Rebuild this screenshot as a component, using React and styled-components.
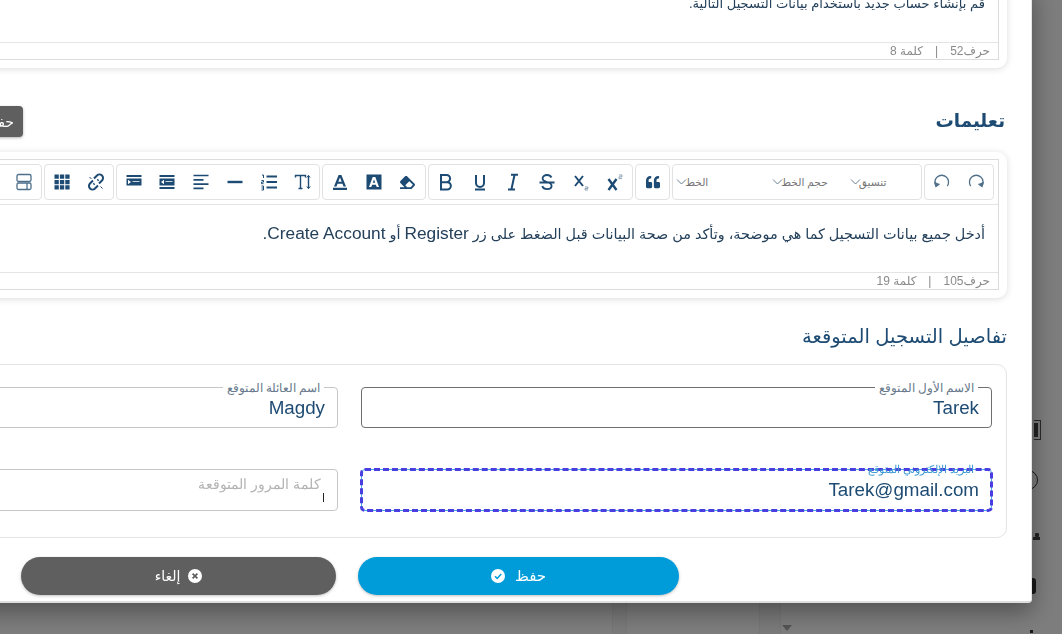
import React from 'react';
import styled, { createGlobalStyle } from 'styled-components';
import { FaQuoteLeft, FaEraser } from 'react-icons/fa';

const navy = '#1d4b73';

const GlobalStyle = createGlobalStyle`
	html, body {
		margin: 0;
		height: 100%;
		overflow: hidden;
		background: #fbfbfb;
		font-family: "Liberation Sans", "DejaVu Sans", sans-serif;
	}
	* { box-sizing: border-box; }
`

const Page = styled.div`
	display: flex;
	height: 100vh;
	.space { width: 612px; }
	.mid { width: 132px; }
`

const Band = styled.div`
	width: ${p => p.$w}px;
	background: #f4f4f4;
	border-left: 1px solid #ececec;
	border-right: 1px solid #ececec;
`

const SortCell = styled.div`
	width: 251px;
	display: flex;
	align-items: flex-end;
	padding: 0 0 3px 1px;
	i {
		border-left: 5px solid transparent;
		border-right: 5px solid transparent;
		border-top: 6px solid #a8a8a8;
	}
`

const Rail = styled.div`
	width: 30px;
	display: flex;
	flex-direction: column;
	align-items: flex-start;
	padding-top: 420px;
	.bracket {
		width: 7px;
		height: 20px;
		margin-left: 2px;
		border: 1px solid #555;
		border-left: none;
		background: linear-gradient(#444, #444) no-repeat 0 50% / 4px 14px;
	}
	.ring {
		width: 20px;
		height: 20px;
		border-radius: 50%;
		border: 1.5px solid #333;
		margin: 30px 0 0 -14px;
	}
	.dots {
		width: 7px;
		height: 7px;
		margin: 43px 0 0 1px;
		background: radial-gradient(circle at 4px 2px, #444 2px, transparent 2.5px), linear-gradient(#444, #444) no-repeat 0 100% / 7px 3px;
	}
	.block {
		width: 4px;
		height: 16px;
		background: #333;
		border-radius: 0 3px 3px 0;
		margin-top: 38px;
	}
	.tip {
		width: 3px;
		height: 3px;
		margin: 36px 0 0 -2px;
		background: #333;
	}
`

const Overlay = styled.div`
	position: fixed;
	inset: 0;
	display: flex;
	justify-content: flex-end;
	align-items: flex-end;
	padding: 0 30px 31px 0;
	background: rgba(0, 0, 0, 0.5);
	overflow: hidden;
`

const Modal = styled.div`
	direction: rtl;
	flex-shrink: 0;
	width: 1365px;
	padding: 0 24px 6px 25px;
	background: #fff;
	border-bottom: 2px solid #dedede;
	border-right: 1px solid #e6e6e6;
	border-radius: 4px;
	box-shadow: 0 8px 24px rgba(0, 0, 0, 0.38);
`

const Card = styled.div`
	padding: 7px 8px 8px 8px;
	background: #fff;
	border-radius: 10px;
	box-shadow: 0 1px 7px rgba(0, 0, 0, 0.14);
`

const EditorBox = styled.div`
	border: 1px solid #dcdcdc;
	overflow: hidden;
`

const Toolbar = styled.div`
	display: flex;
	gap: 2px;
	height: 45px;
	padding: 4px 4px 0 0;
	border-bottom: 1px solid #e4e4e4;
`

const Group = styled.div`
	display: flex;
	align-items: center;
	flex-shrink: 0;
	width: ${p => p.$w ? `${p.$w}px` : 'auto'};
	height: 36px;
	border: 1px solid #e2e2e2;
	border-radius: 4px;
	background: #fff;
`

const ToolBtn = styled.span`
	display: flex;
	align-items: center;
	justify-content: center;
	width: 33.8px;
	height: 34px;
	color: ${navy};
	svg { display: block; }
`

const Dropdown = styled.span`
	display: flex;
	align-items: center;
	margin-right: ${p => p.$mr}px;
	font-size: 10.6px;
	color: #757575;
	svg { margin: -2px -2px 0 0; }
`

const EditorText = styled.div`
	height: ${p => p.$h}px;
	padding: ${p => p.$top}px 13px 0;
	font-size: ${p => p.$fs}px;
	line-height: 20px;
	color: #24405a;
	b {
		font-weight: 400;
		font-size: 17.3px;
	}
`

const Counter = styled.div`
	display: flex;
	align-items: center;
	gap: 12px;
	height: 17px;
	padding: 0 8px;
	font-size: 12px;
	color: #8a8a8a;
	border-top: 1px solid #e4e4e4;
`

const HeadRow = styled.div`
	display: flex;
	align-items: center;
	margin: 38px 2px 15px 0;
`

const SectionTitle = styled.h2`
	margin: -2px 0 0;
	font-size: 18.3px;
	font-weight: 700;
	line-height: 31px;
	color: ${navy};
`

const MiniButton = styled.button`
	width: 60px;
	height: 31px;
	margin: 0 auto 0 271px;
	padding: 0 9px;
	text-align: right;
	font: inherit;
	font-size: 14px;
	color: #fff;
	background: #5f5f5f;
	border: none;
	border-radius: 4px;
	box-shadow: 0 1px 3px rgba(0, 0, 0, 0.3);
`

const DetailsTitle = styled.h3`
	margin: 26px 0 16px;
	font-size: 19.5px;
	font-weight: 400;
	line-height: 24px;
	color: ${navy};
`

const DetailsCard = styled.div`
	display: grid;
	grid-template-columns: 631px 631px;
	column-gap: 23px;
	row-gap: 41px;
	padding: 22px 14px 26px;
	border: 1px solid #e4e4e4;
	border-radius: 10px;
`

const Field = styled.div`
	position: relative;
	height: ${p => p.$h}px;
	display: flex;
	align-items: center;
	padding: 0 12px;
	font-family: "Liberation Sans", sans-serif;
	font-size: 18.8px;
	color: ${navy};
	border: 1px solid ${p => p.$hover ? '#6f6f6f' : '#c6c6c6'};
	border-radius: 4px;
	${p => p.$focus && `
		border-color: #4aa8e0;
		outline: 3px dashed #4a3ee0;
		outline-offset: -2px;
	`}
`

const FieldLabel = styled.label`
	position: absolute;
	top: -8px;
	right: 13px;
	padding: 0 4px;
	font-size: ${p => p.$focus ? 10.6 : 11.7}px;
	line-height: 15px;
	color: ${p => p.$focus ? '#3f9bd3' : '#66788a'};
	background: ${p => p.$focus ? 'transparent' : '#fff'};
`

const Placeholder = styled.span`
	align-self: flex-start;
	margin: 6px 4px 0 0;
	font-size: 14px;
	line-height: 16px;
	color: #b3b3b3;
`

const Caret = styled.i`
	position: absolute;
	right: 13px;
	top: 23px;
	width: 1px;
	height: 9px;
	background: #222;
`

const Actions = styled.div`
	display: flex;
	gap: 22px;
	margin-top: 19px;
	padding-right: 328px;
`

const ActionButton = styled.button`
	display: flex;
	align-items: center;
	justify-content: center;
	gap: ${p => p.$gap}px;
	width: ${p => p.$w}px;
	height: 38px;
	font: inherit;
	font-size: ${p => p.$fs}px;
	color: #fff;
	background: ${p => p.$bg};
	border: none;
	border-radius: 19px;
	box-shadow: 0 1px 3px rgba(0, 0, 0, 0.25);
`

const Chevron = () => (
	<svg width="11" height="11" viewBox="0 0 11 11" fill="none" stroke="#6b7f92" strokeWidth="1">
		<path d="M1 3.5 5.5 8 10 3.5" />
	</svg>
)

const S = ({ children, fill, stroke = navy, sw = 2 }) => (
	<svg width="20" height="20" viewBox="0 0 20 20" fill={fill || 'none'} stroke={fill ? 'none' : stroke} strokeWidth={sw}>
		{children}
	</svg>
)

const icons = {
	redo: <S stroke="#51708a" sw={1.3}><path d="M4.7 14A6.8 6.8 0 1 1 15.8 14" /><path d="M17.2 10 16 14.5 12.5 12" fill="#51708a" /></S>,
	undo: <S stroke="#51708a" sw={1.3}><path d="M15.3 14A6.8 6.8 0 1 0 4.2 14" /><path d="M2.8 10 4 14.5 7.5 12" fill="#51708a" /></S>,
	quote: <FaQuoteLeft size={14} />,
	bold: <S><path d="M5 3h5.500a3.600 3.600 0 0 1 0 7.200H5zM5 10.200h6.200a3.600 3.600 0 0 1 0 7.300H5z" /></S>,
	underline: <S><path d="M6 3v8a4 4 0 0 0 8 0V3M5 17.500h10" /></S>,
	italic: <S sw={2}><path d="M8 2.800h7M5 17.500h7M11.500 3 8.500 17" /></S>,
	strike: <S sw={1.8}><path d="M14.500 5.500C13.500 3.500 11.500 3 10 3 7.500 3 5.600 4.300 5.600 6.400c0 4.400 9 2.800 9 7.400 0 2.200-2 3.400-4.600 3.400-2 0-4-1-4.800-3M2.500 10.500h15" /></S>,
	sub: <S sw={2}><path d="m4 4 8 10M12 4 4 14" /><path d="M14 15h3v1.500h-3V18h3" stroke="#8ea3b5" strokeWidth="1" /></S>,
	sup: <S sw={2.4}><path d="m3.500 7 8 11M11.500 7l-8 11" /><path d="M14 3h3v1.800h-3v1.800h3" stroke="#8ea3b5" strokeWidth="1" /></S>,
	fontColor: <S fill={navy}><path fillRule="evenodd" d="M8.600 3h2.800l4.600 11.400h-2.500l-1-2.600H7.500l-1 2.600H4zM8.300 9.800h3.400L10 5.400zM3 15.800h14V18H3z" /></S>,
	highlight: <S fill={navy}><path fillRule="evenodd" d="M2.500 2.500h15v15h-15zM8.700 5 5 15h2.300l.8-2.300h3.800l.8 2.300H15L11.300 5zM8.800 10.800 10 7.400l1.200 3.400z" /></S>,
	eraser: <FaEraser size={15} style={{ transform: 'scaleX(-1)' }} />,
	textSize: <S stroke={navy} sw={1.4}><path d="M2.500 5.500V3.500h10v2M7.500 3.500V16.500M5.500 16.500h4M15.500 3.500v13" /><path d="m13.800 5.500 1.700-2 1.700 2M13.800 14.500l1.700 2 1.700-2" strokeWidth="1" /></S>,
	list: <S stroke={navy} sw={1.8}><path d="M7.500 4.500H18M7.500 10H18M7.500 15.500H18" /><path d="M3 3h1.500v3M2.500 8.500h2v1.600h-2v1.600h2M2.500 14h2v4h-2M2.500 16h2" strokeWidth="1" /></S>,
	rule: <S stroke={navy} sw={2.4}><path d="M2.500 10h15" /></S>,
	align: <S stroke={navy} sw={1.7}><path d="M2.500 3.500h15M2.500 7.800h10M2.500 12.100h15M2.500 16.400h10" /></S>,
	outdent: <S fill={navy}><path fillRule="evenodd" d="M2.500 3h15v2h-15zM2.500 6.500h15v7h-15zM2.500 15h15v2h-15zM4 10l3-2.200v4.400zM8.500 9h7v.8h-7z" /></S>,
	indent: <S fill={navy}><path fillRule="evenodd" d="M2.500 3h15v2h-15zM2.500 6.500h15v7h-15zM7 10 4 7.800v4.400zM8.500 9h7v.8h-7z" /></S>,
	unlink: <S stroke={navy} sw={2}><path d="M8 6.500 11 3.500a3.500 3.500 0 0 1 5 5l-3 3M12 13.500l-3 3a3.500 3.500 0 0 1-5-5l3-3M7.500 12.500l1-1M11.500 8.500l1-1" /><path d="M14.500 14.500l2 2M3.500 5l2 2" strokeWidth="1" /></S>,
	table: <S fill={navy}><path d="M2.500 2.500h4.300v4.300H2.500zM7.900 2.500h4.300v4.300H7.900zM13.300 2.500h4.300v4.300h-4.300zM2.500 7.900h4.300v4.300H2.500zM7.900 7.900h4.300v4.300H7.900zM13.300 7.900h4.300v4.300h-4.300zM2.500 13.300h4.300v4.300H2.500zM7.900 13.300h4.300v4.300H7.900zM13.300 13.300h4.300v4.300h-4.300z" /></S>,
	layout: <S stroke="#4e6f8c" sw={1.3}><rect x="3" y="2.500" width="14" height="7" rx="1.500" /><rect x="3" y="11" width="14" height="6.500" rx="1.500" /><path d="M13 11v6.500" /></S>,
}

// listed from the right, the toolbar runs rtl
const toolGroups = [
	['quote'],
	['sup', 'sub', 'strike', 'italic', 'underline', 'bold'],
	['eraser', 'highlight', 'fontColor'],
	['textSize', 'list', 'rule', 'align', 'outdent', 'indent'],
	['unlink', 'table'],
	['layout', 'layout'],
]

const Tools = ({ names }) => (
	<Group>
		{names.map((n, i) => <ToolBtn key={i}>{icons[n]}</ToolBtn>)}
	</Group>
)

const Count = ({ chars, words }) => (
	<Counter>
		<span>حرف{chars}</span>
		<span>|</span>
		<span>كلمة {words}</span>
	</Counter>
)

const CheckIcon = () => (
	<svg width="14" height="14" viewBox="0 0 14 14">
		<circle cx="7" cy="7" r="7" fill="#fff" />
		<path d="M4 7.200 6.200 9.400 10.200 5" fill="none" stroke="#009cd9" strokeWidth="1.500" />
	</svg>
)

const CloseIcon = () => (
	<svg width="14" height="14" viewBox="0 0 14 14">
		<circle cx="7" cy="7" r="7" fill="#fff" />
		<path d="M4.600 4.600 9.400 9.400M9.400 4.600 4.600 9.400" fill="none" stroke="#5f5f5f" strokeWidth="1.700" />
	</svg>
)

const App = () => (
	<>
		<GlobalStyle />
		<Page>
			<div className="space" />
			<Band $w={15} />
			<div className="mid" />
			<Band $w={22} />
			<SortCell><i /></SortCell>
			<Rail>
				<div className="bracket" />
				<div className="ring" />
				<div className="dots" />
				<div className="block" />
				<div className="tip" />
			</Rail>
		</Page>
		<Overlay>
			<Modal>
				<Card>
					<EditorBox>
						<EditorText $h={48} $top={0} $fs={13.1}>قم بإنشاء حساب جديد باستخدام بيانات التسجيل التالية.</EditorText>
						<Count chars={52} words={8} />
					</EditorBox>
				</Card>

				<HeadRow>
					<SectionTitle>تعليمات</SectionTitle>
					<MiniButton>حفظ</MiniButton>
				</HeadRow>

				<Card>
					<EditorBox>
						<Toolbar>
							<Tools names={['redo', 'undo']} />
							<Group $w={250}>
								<Dropdown $mr={35}>تنسيق<Chevron /></Dropdown>
								<Dropdown $mr={22}>حجم الخط<Chevron /></Dropdown>
								<Dropdown $mr={64}>الخط<Chevron /></Dropdown>
							</Group>
							{toolGroups.map((names, i) => <Tools key={i} names={names} />)}
						</Toolbar>
						<EditorText $h={67} $top={18} $fs={14.4}>
							أدخل جميع بيانات التسجيل كما هي موضحة، وتأكد من صحة البيانات قبل الضغط على زر <b>Register</b> أو <b>Create Account.</b>
						</EditorText>
						<Count chars={105} words={19} />
					</EditorBox>
				</Card>

				<DetailsTitle>تفاصيل التسجيل المتوقعة</DetailsTitle>
				<DetailsCard>
					<Field $h={41} $hover>
						<FieldLabel>الاسم الأول المتوقع</FieldLabel>
						Tarek
					</Field>
					<Field $h={41}>
						<FieldLabel>اسم العائلة المتوقع</FieldLabel>
						Magdy
					</Field>
					<Field $h={42} $focus>
						<FieldLabel $focus>البريد الإلكتروني المتوقع</FieldLabel>
						Tarek@gmail.com
					</Field>
					<Field $h={42}>
						<Placeholder>كلمة المرور المتوقعة</Placeholder>
						<Caret />
					</Field>
				</DetailsCard>

				<Actions>
					<ActionButton $w={321} $bg="#009cd9" $fs={15} $gap={10}>حفظ<CheckIcon /></ActionButton>
					<ActionButton $w={315} $bg="#5f5f5f" $fs={14} $gap={8}><CloseIcon />إلغاء</ActionButton>
				</Actions>
			</Modal>
		</Overlay>
	</>
);

export default App;
